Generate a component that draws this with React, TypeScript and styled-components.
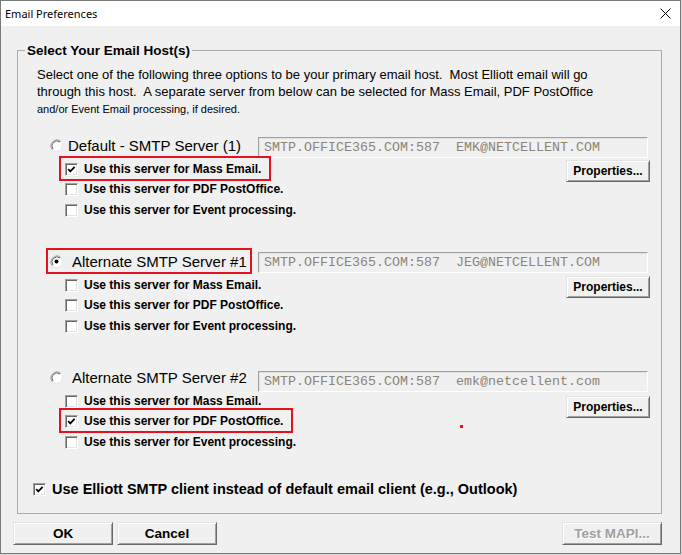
import React from 'react';
import styled, { createGlobalStyle } from 'styled-components';

const GlobalStyle = createGlobalStyle`
  html, body { margin: 0; padding: 0; background: #d4d4d4; }
  body { font-family: "Liberation Sans", Arial, sans-serif; color: #000; }
  * { box-sizing: border-box; }
`;

const Window = styled.div`
  width: 681px;
  height: 554px;
  border: 1px solid #7a7a7a;
  background: #f0f0f0;
  display: flex;
  flex-direction: column;
`;

const TitleBar = styled.div`
  height: 25px;
  flex: none;
  background: #fff;
  display: flex;
  align-items: center;
  justify-content: space-between;
  padding: 0 9px 0 4px;
`;

const Title = styled.span`
  font-family: "Noto Sans", "Liberation Sans", sans-serif;
  font-size: 11px;
  line-height: 16px;
  color: #000;
`;

const CloseIcon = styled.svg`
  display: block;
`;

const Body = styled.div`
  flex: 1;
  display: flex;
  flex-direction: column;
  padding: 0 18px 0 12px;
`;

const GroupBox = styled.fieldset`
  margin: 16px 0 0 4px;
  padding: 0 0 14px 0;
  border: 1px solid #acacac;
  min-width: 0;
`;

const Legend = styled.legend`
  margin-left: 7px;
  padding: 0 2px;
  font-size: 13.5px;
  line-height: 17px;
  font-weight: bold;
`;

const GroupContent = styled.div`
  padding: 0 11px 0 19px;
  display: flex;
  flex-direction: column;
`;

const Description = styled.div`
  margin-top: 7px;
`;

const DescLine = styled.span<{ $small?: boolean }>`
  display: block;
  white-space: pre;
  font-size: ${(p) => (p.$small ? '11px' : '13px')};
  line-height: ${(p) => (p.$small ? '19px' : '17px')};
`;

const Hosts = styled.div`
  margin: 16px 0 0 13px;
  display: flex;
  flex-direction: column;
  gap: 31px;
`;

const HostSection = styled.section`
  display: flex;
  flex-direction: column;
`;

const HostHeader = styled.div`
  height: 21px;
  display: grid;
  grid-template-columns: 208px 390px;
  align-items: start;
`;

const Annotated = styled.div<{ $mark?: string }>`
  position: relative;
  &::after {
    content: '';
    display: ${(p) => (p.$mark ? 'block' : 'none')};
    position: absolute;
    inset: ${(p) => p.$mark || '0'};
    border: 2px solid #e3121c;
    pointer-events: none;
  }
`;

const RadioLabel = styled(Annotated)<{ $gap: number }>`
  justify-self: start;
  height: 21px;
  display: inline-flex;
  align-items: center;
  gap: ${(p) => p.$gap}px;
  font-size: 15px;
  line-height: 17px;
  white-space: nowrap;
`;

const ServerField = styled.div<{ $top: number }>`
  margin-top: ${(p) => p.$top}px;
  height: 21px;
  width: 390px;
  border: 1px solid;
  border-color: #a0a0a0 #ffffff #ffffff #a0a0a0;
  box-shadow: inset 1px 1px 0 #e3e3e3;
  background: #f0f0f0;
  display: flex;
  align-items: center;
  padding-left: 5px;
  font-family: "Liberation Mono", "Courier New", monospace;
  font-size: 13.33px;
  color: #8c8479;
  white-space: pre;
`;

const OptionsArea = styled.div`
  margin-top: 3px;
  display: flex;
  justify-content: space-between;
  align-items: flex-start;
`;

const OptionList = styled.div`
  position: relative;
  margin-left: 15px;
  display: flex;
  flex-direction: column;
  & > :nth-child(3) { margin-top: 1px; }
`;

const OptionRow = styled(Annotated)`
  width: fit-content;
  height: 20px;
  display: flex;
  align-items: center;
  gap: 6px;
  font-size: 12px;
  font-weight: bold;
  white-space: nowrap;
`;

const BigOptionRow = styled(OptionRow)`
  margin: 27px 0 0 -4px;
  font-size: 14.5px;
`;

const Box = styled.span`
  width: 13px;
  height: 13px;
  flex: none;
  border: 1px solid;
  border-color: #a0a0a0 #ffffff #ffffff #a0a0a0;
  box-shadow: inset 1px 1px 0 #696969, inset -1px -1px 0 #e3e3e3;
  background: #fff;
  display: flex;
  align-items: center;
  justify-content: center;
`;

const Speck = styled.span`
  position: absolute;
  left: 395px;
  top: 34px;
  width: 3px;
  height: 3px;
  background: #e3121c;
`;

const Button = styled.button<{ $w: number; $h: number; $size: number; $top?: number }>`
  width: ${(p) => p.$w}px;
  height: ${(p) => p.$h}px;
  margin-top: ${(p) => p.$top ?? 0}px;
  flex: none;
  padding: 0;
  background: #f0f0f0;
  border: 1px solid;
  border-color: #e3e3e3 #696969 #696969 #e3e3e3;
  box-shadow: inset 1px 1px 0 #ffffff, inset -1px -1px 0 #a0a0a0;
  font-family: "Liberation Sans", Arial, sans-serif;
  font-size: ${(p) => p.$size}px;
  font-weight: bold;
  color: #000;
  &:disabled {
    color: #a0a0a0;
    text-shadow: 1px 1px 0 #ffffff;
  }
`;

const Footer = styled.div`
  margin-top: 8px;
  display: flex;
  justify-content: space-between;
`;

const ButtonGroup = styled.div`
  display: flex;
  gap: 4px;
`;

const CheckMark = () => (
  <svg width="11" height="11" viewBox="0 0 11 11">
    <path d="M2.2 5.2 L4.3 7.4 L8.6 2.8" stroke="#000" strokeWidth="1.7" fill="none" />
  </svg>
);

const Checkbox = ({ checked }: { checked: boolean }) => <Box>{checked && <CheckMark />}</Box>;

const Radio = ({ checked }: { checked: boolean }) => (
  <svg width="13" height="13" viewBox="0 0 13 13" style={{ flex: 'none' }}>
    <circle cx="6.5" cy="6.5" r="6" fill="#ffffff" stroke="#e3e3e3" strokeWidth="1" />
    <path d="M2.3 10.7 A6 6 0 0 1 10.7 2.3" stroke="#a0a0a0" strokeWidth="1" fill="none" />
    <path d="M3 10 A5 5 0 0 1 10 3" stroke="#696969" strokeWidth="1" fill="none" />
    {checked && <circle cx="6.5" cy="6.5" r="2" fill="#000" />}
  </svg>
);

type Host = {
  label: string;
  selected: boolean;
  value: string;
  gap: number;
  fieldTop: number;
  buttonTop: number;
  headerMark?: string;
  options: boolean[];
  optionMark: number;
  speck?: boolean;
};

const optionLabels = [
  'Use this server for Mass Email.',
  'Use this server for PDF PostOffice.',
  'Use this server for Event processing.',
];

const hosts: Host[] = [
  {
    label: 'Default - SMTP Server (1)',
    selected: false,
    value: 'SMTP.OFFICE365.COM:587  EMK@NETCELLENT.COM',
    gap: 5,
    fieldTop: 2,
    buttonTop: 1,
    options: [true, false, false],
    optionMark: 0,
  },
  {
    label: 'Alternate SMTP Server #1',
    selected: true,
    value: 'SMTP.OFFICE365.COM:587  JEG@NETCELLENT.COM',
    gap: 9,
    fieldTop: 1,
    buttonTop: 1,
    headerMark: '-3px -5px -2px -4px',
    options: [false, false, false],
    optionMark: -1,
  },
  {
    label: 'Alternate SMTP Server #2',
    selected: false,
    value: 'SMTP.OFFICE365.COM:587  emk@netcellent.com',
    gap: 9,
    fieldTop: 4,
    buttonTop: 5,
    options: [false, true, false],
    optionMark: 1,
    speck: true,
  },
];

export default function App() {
  return (
    <>
      <GlobalStyle />
      <Window>
        <TitleBar>
          <Title>Email Preferences</Title>
          <CloseIcon width="11" height="11" viewBox="0 0 11 11">
            <path d="M0.5 0.5 L10.5 10.5 M10.5 0.5 L0.5 10.5" stroke="#000" strokeWidth="1" />
          </CloseIcon>
        </TitleBar>
        <Body>
          <GroupBox>
            <Legend>Select Your Email Host(s)</Legend>
            <GroupContent>
              <Description>
                <DescLine>Select one of the following three options to be your primary email host.  Most Elliott email will go</DescLine>
                <DescLine>through this host.  A separate server from below can be selected for Mass Email, PDF PostOffice</DescLine>
                <DescLine $small>and/or Event Email processing, if desired.</DescLine>
              </Description>
              <Hosts>
                {hosts.map((h) => (
                  <HostSection key={h.label}>
                    <HostHeader>
                      <RadioLabel $gap={h.gap} $mark={h.headerMark}>
                        <Radio checked={h.selected} />
                        <span>{h.label}</span>
                      </RadioLabel>
                      <ServerField $top={h.fieldTop}>{h.value}</ServerField>
                    </HostHeader>
                    <OptionsArea>
                      <OptionList>
                        {optionLabels.map((text, i) => (
                          <OptionRow key={text} $mark={i === h.optionMark ? '-3px -10px -2px -6px' : undefined}>
                            <Checkbox checked={h.options[i]} />
                            <span>{text}</span>
                          </OptionRow>
                        ))}
                        {h.speck && <Speck />}
                      </OptionList>
                      <Button $w={84} $h={22} $size={12} $top={h.buttonTop}>
                        Properties...
                      </Button>
                    </OptionsArea>
                  </HostSection>
                ))}
              </Hosts>
              <BigOptionRow>
                <Checkbox checked />
                <span>Use Elliott SMTP client instead of default email client (e.g., Outlook)</span>
              </BigOptionRow>
            </GroupContent>
          </GroupBox>
          <Footer>
            <ButtonGroup>
              <Button $w={100} $h={23} $size={13.5}>OK</Button>
              <Button $w={100} $h={23} $size={13.5}>Cancel</Button>
            </ButtonGroup>
            <Button $w={100} $h={23} $size={13.5} disabled>
              Test MAPI...
            </Button>
          </Footer>
        </Body>
      </Window>
    </>
  );
}
